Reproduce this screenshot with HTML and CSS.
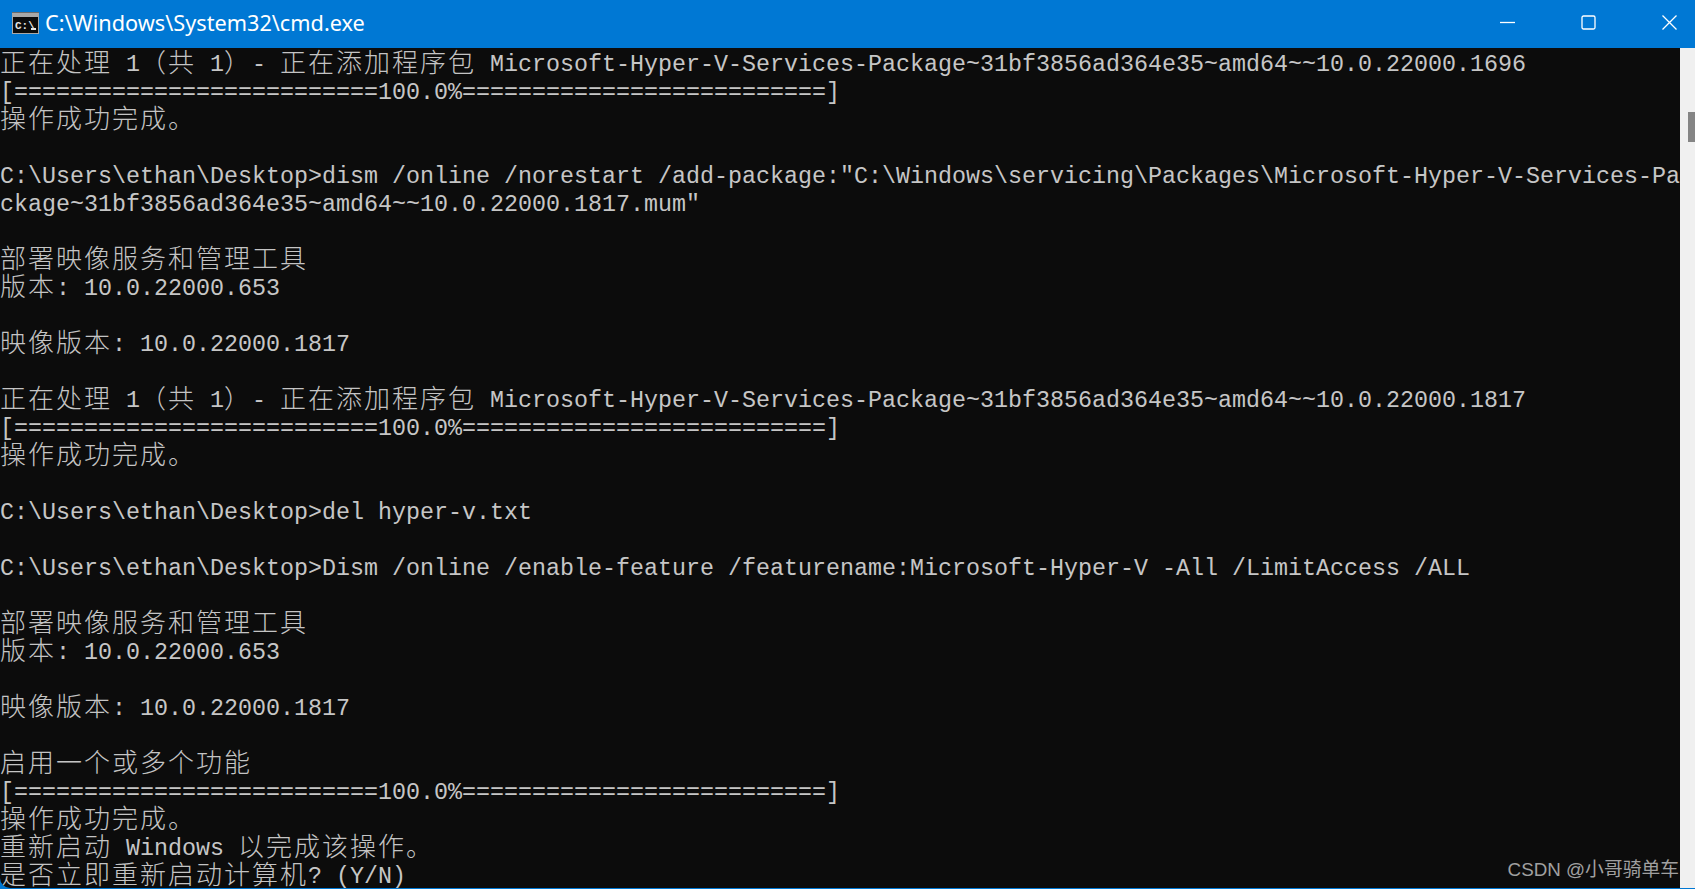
FILE: index.html
```html
<!DOCTYPE html>
<html lang="zh-CN">
<head>
<meta charset="utf-8">
<title>cmd.exe</title>
<link rel="stylesheet" href="styles.css">
</head>
<body>
<div class="window">
  <header class="titlebar">
    <svg class="app-icon" width="27" height="22" viewBox="0 0 27 22">
      <rect width="27" height="22" fill="#a8a8a8"/>
      <rect x="0" y="0" width="27" height="1" fill="#6a6a6a"/>
      <rect x="1" y="5" width="25" height="16" fill="#0c0c0c"/>
      <text x="3" y="17" class="app-icon-text">C:\</text>
      <rect x="19" y="16" width="5" height="2" fill="#e6e6e6"/>
    </svg>
    <span class="title">C:\Windows\System32\cmd.exe</span>
    <div class="controls">
      <svg width="15" height="15" viewBox="0 0 15 15"><path d="M0 7.5H15" class="glyph"/></svg>
      <svg width="15" height="15" viewBox="0 0 15 15"><rect x="1" y="1" width="13" height="13" rx="1.5" class="glyph"/></svg>
      <svg width="15" height="15" viewBox="0 0 15 15"><path d="M0.5 0.5L14.5 14.5M14.5 0.5L0.5 14.5" class="glyph"/></svg>
    </div>
  </header>
  <div class="body">
    <main class="console">
      <div class="line"><span class="cjk">正在处理</span> 1<span class="cjk">（共</span> 1<span class="cjk">）</span>- <span class="cjk">正在添加程序包</span> Microsoft-Hyper-V-Services-Package~31bf3856ad364e35~amd64~~10.0.22000.1696</div>
      <div class="line">[==========================100.0%==========================]</div>
      <div class="line"><span class="cjk">操作成功完成。</span></div>
      <div class="line"></div>
      <div class="line">C:\Users\ethan\Desktop&gt;dism /online /norestart /add-package:"C:\Windows\servicing\Packages\Microsoft-Hyper-V-Services-Pa</div>
      <div class="line">ckage~31bf3856ad364e35~amd64~~10.0.22000.1817.mum"</div>
      <div class="line"></div>
      <div class="line"><span class="cjk">部署映像服务和管理工具</span></div>
      <div class="line"><span class="cjk">版本</span>: 10.0.22000.653</div>
      <div class="line"></div>
      <div class="line"><span class="cjk">映像版本</span>: 10.0.22000.1817</div>
      <div class="line"></div>
      <div class="line"><span class="cjk">正在处理</span> 1<span class="cjk">（共</span> 1<span class="cjk">）</span>- <span class="cjk">正在添加程序包</span> Microsoft-Hyper-V-Services-Package~31bf3856ad364e35~amd64~~10.0.22000.1817</div>
      <div class="line">[==========================100.0%==========================]</div>
      <div class="line"><span class="cjk">操作成功完成。</span></div>
      <div class="line"></div>
      <div class="line">C:\Users\ethan\Desktop&gt;del hyper-v.txt</div>
      <div class="line"></div>
      <div class="line">C:\Users\ethan\Desktop&gt;Dism /online /enable-feature /featurename:Microsoft-Hyper-V -All /LimitAccess /ALL</div>
      <div class="line"></div>
      <div class="line"><span class="cjk">部署映像服务和管理工具</span></div>
      <div class="line"><span class="cjk">版本</span>: 10.0.22000.653</div>
      <div class="line"></div>
      <div class="line"><span class="cjk">映像版本</span>: 10.0.22000.1817</div>
      <div class="line"></div>
      <div class="line"><span class="cjk">启用一个或多个功能</span></div>
      <div class="line">[==========================100.0%==========================]</div>
      <div class="line"><span class="cjk">操作成功完成。</span></div>
      <div class="line"><span class="cjk">重新启动</span> Windows <span class="cjk">以完成该操作。</span></div>
      <div class="line"><span class="cjk">是否立即重新启动计算机</span>? (Y/N)</div>
    </main>
    <aside class="scrollbar"><div class="thumb"></div></aside>
    <div class="watermark">CSDN @小哥骑单车</div>
  </div>
</div>
</body>
</html>
```
FILE: styles.css
```css
html, body {
  margin: 0;
  padding: 0;
  height: 100%;
  overflow: hidden;
  background: #0078d4;
}
.window {
  width: 1695px;
  height: 889px;
  display: flex;
  flex-direction: column;
  background: #0078d4;
}
.titlebar {
  height: 48px;
  flex: none;
  display: flex;
  align-items: center;
  padding: 0 18px 3px 12px;
  box-sizing: border-box;
}
.app-icon { flex: none; }
.app-icon-text {
  font: bold 11px "Liberation Mono", monospace;
  fill: #e6e6e6;
}
.title {
  margin-left: 6px;
  font: 21.7px/28px "Noto Sans", "Open Sans", sans-serif;
  color: #ffffff;
}
.controls {
  margin-left: auto;
  display: flex;
  gap: 66px;
}
.glyph {
  fill: none;
  stroke: #ffffff;
  stroke-width: 1.3;
}
.body {
  position: relative;
  height: 840px;
  flex: none;
  display: flex;
  overflow: hidden;
  border-bottom-left-radius: 10px;
}
.console {
  width: 1680px;
  flex: none;
  box-sizing: border-box;
  padding-top: 3px;
  background: #0c0c0c;
  color: #c6c6c6;
  font: 23.33px/28px "Liberation Mono", monospace;
  overflow: hidden;
}
.line {
  height: 28px;
  white-space: pre;
}
.cjk {
  font-family: "Noto Sans CJK SC", sans-serif;
  font-size: 26px;
  font-weight: 300;
  letter-spacing: 2px;
  line-height: 0;
  vertical-align: -1px;
  color: #c4c4c4;
}
.scrollbar {
  flex: 1;
  background: #f0f0f0;
  padding-top: 64px;
  display: flex;
  justify-content: flex-end;
  align-items: flex-start;
}
.thumb {
  width: 7px;
  height: 30px;
  background: #858585;
}
.watermark {
  position: absolute;
  right: 16px;
  bottom: 6px;
  font: 18.8px/24px "Liberation Sans", "Noto Sans CJK SC", sans-serif;
  color: #a0a0a0;
}
```
